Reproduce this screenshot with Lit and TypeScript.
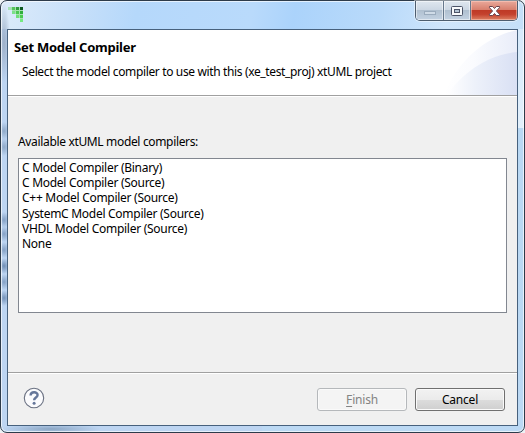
import { LitElement, html, css, svg } from "lit";
import { customElement, property } from "lit/decorators.js";

const LOGO: [number, number, string][] = [
  [0, 0, "#a6e3b4"], [4, 0, "#55c45c"], [8, 0, "#2f9c3c"], [12, 0, "#0d5a22"],
  [4, 4, "#7be08a"], [8, 4, "#4bc853"], [12, 4, "#2fae3c"],
  [8, 8, "#6fe07a"], [12, 8, "#48cc50"],
  [12, 12, "#74ea80"],
];

@customElement("window-controls")
class WindowControls extends LitElement {
  static styles = css`
    :host { display: flex; box-sizing: border-box; width: 103px; height: 20px; border: 1px solid #4d5d6f; border-top: 0; border-radius: 0 0 5px 5px; overflow: hidden; box-shadow: 0 0 0 1px rgba(255,255,255,.45); }
    .btn { display: flex; box-sizing: border-box; height: 19px; background: linear-gradient(#dfe7ef 0, #cdd8e4 45%, #b0c0d0 50%, #c3d2e2 100%); box-shadow: inset 0 0 0 1px rgba(255,255,255,.5); }
    .min { width: 28px; border-right: 1px solid #66788c; }
    .max { width: 27px; border-right: 1px solid #66788c; }
    .close { flex: 1; background: linear-gradient(#e9a99b 0, #d8806e 45%, #bf3a26 50%, #c4412d 70%, #dc8063 100%); box-shadow: inset 0 0 0 1px rgba(255,210,195,.5); }
    svg { display: block; }
  `;
  render() {
    return html`
      <div class="btn min"><svg width="27" height="19"><rect x="8.5" y="10.5" width="11" height="3" fill="#cfdbe7" stroke="#9aabbd"/></svg></div>
      <div class="btn max"><svg width="26" height="19"><rect x="7.5" y="5.5" width="11" height="9" rx="1" fill="#f8fafc" stroke="#4c5468"/><rect x="10.5" y="8.5" width="5" height="3" fill="#b4c4d5" stroke="#4c5468"/></svg></div>
      <div class="btn close"><svg width="46" height="19"><path d="M18.500 5.500h3.200l1.800 2 1.800-2h3.200v1.200L25.400 10l3.100 3.300v1.200h-3.200l-1.800-2-1.800 2h-3.200v-1.200l3.100-3.300-3.100-3.300z" fill="#fff" stroke="#66424c" stroke-width="1"/></svg></div>
    `;
  }
}

@customElement("dialog-button")
class DialogButton extends LitElement {
  @property() label = "";
  @property() mnemonic = "";
  @property({ type: Boolean, reflect: true }) disabled = false;
  static styles = css`
    :host { display: flex; align-items: center; justify-content: center; box-sizing: border-box; width: 90px; height: 23px; border: 1px solid #707070; border-radius: 3px; color: #000; letter-spacing: -.2px; background: linear-gradient(#f2f2f2 0, #ebebeb 50%, #dddddd 50%, #cfcfcf 100%); box-shadow: inset 0 0 0 1px #fafafa; }
    :host([disabled]) { border-color: #b5b8bb; color: #838383; background: #f4f4f4; }
    .key { text-decoration: underline; text-underline-offset: 2px; }
  `;
  render() {
    return html`<span><span class="key">${this.mnemonic}</span>${this.label}</span>`;
  }
}

@customElement("app-root")
class AppRoot extends LitElement {
  private compilers = [
    "C Model Compiler (Binary)",
    "C Model Compiler (Source)",
    "C++ Model Compiler (Source)",
    "SystemC Model Compiler (Source)",
    "VHDL Model Compiler (Source)",
    "None",
  ];
  static styles = css`
    :host { display: block; width: 525px; height: 433px; overflow: hidden; background: #eef2f5; font: 12px/15px "Noto Sans", "Open Sans", sans-serif; color: #000; }
    .window { display: grid; grid-template-rows: 28px 397px; box-sizing: border-box; width: 525px; height: 433px; padding: 0 6px 6px 6px; border: 1px solid #2d3b4a; border-radius: 7px;
      background:
        radial-gradient(ellipse 6px 9px at 3px 130px, #8fa9c8, transparent),
        radial-gradient(ellipse 6px 9px at 3px 146px, #8fa9c8, transparent),
        radial-gradient(ellipse 6px 40px at 3px 42px, #9eb0c8, transparent),
        radial-gradient(ellipse 6px 8px at 3px 219px, #84a0c4, transparent),
        radial-gradient(ellipse 6px 8px at 3px 233px, #84a0c4, transparent),
        radial-gradient(ellipse 6px 8px at 3px 249px, #84a0c4, transparent),
        radial-gradient(ellipse 6px 8px at 3px 265px, #6f8db4, transparent),
        radial-gradient(ellipse 6px 8px at 3px 281px, #84a0c4, transparent),
        radial-gradient(ellipse 6px 8px at 3px 297px, #7592b8, transparent),
        radial-gradient(ellipse 50px 5px at 50px 428px, #8ba6c4, transparent),
        linear-gradient(100deg, #dcebfa 0, #c8e0f9 14%, #b5d8fb 26%, #b9dafb 48%, #abd3fb 56%, #b9dafa 72%, #cfe5fb 85%, #c4dff8 100%) 0 0 / 100% 28px no-repeat,
        linear-gradient(90deg, #bdd5f2 50%, transparent 50%),
        linear-gradient(#d3e8fb 0, #e3f0fb 127px, #b9d8f3 127px, #bcd9f4 100%);
      box-shadow: inset 0 0 0 1px rgba(255,255,255,.65); }
    .titlebar { display: flex; justify-content: space-between; }
    .titlebar svg { margin: 6px 0 0 1px; }
    .client { display: grid; grid-template-rows: 66px 1fr 53px; box-sizing: border-box; width: 511px; border: 1px solid #47617d; background: #f0f0f0; }
    .header { display: flex; box-sizing: border-box; border-bottom: 1px solid #a0a0a0; padding: 9px 0 0 6px; background: #fff; position: relative; }
    .swoosh { position: absolute; right: 0; top: 0; }
    .copy { position: relative; }
    .title { font-size: 13px; font-weight: 700; line-height: 16px; letter-spacing: -.25px; white-space: nowrap; }
    .message { margin: 9px 0 0 8px; letter-spacing: -.36px; white-space: nowrap; }
    .body { display: flex; flex-direction: column; border-top: 1px solid #fff; padding: 37px 10px 0 10px; }
    .caption { letter-spacing: -.34px; }
    .list { box-sizing: border-box; height: 155px; margin-top: 9px; padding: 1px 3px; border: 1px solid #828790; background: #fff; }
    .item { height: 15.2px; line-height: 15.2px; letter-spacing: -.28px; white-space: nowrap; }
    .footer { display: flex; justify-content: space-between; align-items: flex-start; border-top: 1px solid #a0a0a0; padding: 15px 12px 0 15px; box-shadow: inset 0 1px #fff; }
    .actions { display: flex; gap: 8px; }
    .help { width: 22px; height: 22px; margin-top: -1px; }
  `;
  render() {
    return html`
      <div class="window">
        <div class="titlebar">
          <svg width="16" height="16" shape-rendering="crispEdges"><path d="M1 0H15V15H12V11H8V7H4V3H1Z" fill="#a5e2ae"/>${LOGO.map(([x, y, c]) => svg`<rect x=${x} y=${y} width="3" height="3" fill=${c}/>`)}</svg>
          <window-controls></window-controls>
        </div>
        <div class="client">
          <div class="header">
            <svg class="swoosh" width="90" height="65">
              <defs>
                <linearGradient id="a" x1="0" x2="1"><stop offset="0" stop-color="#fff"/><stop offset=".4" stop-color="#fafbfe"/><stop offset="1" stop-color="#e9edf9"/></linearGradient>
                <linearGradient id="b" x1="0" x2="1"><stop offset="0" stop-color="#fff"/><stop offset=".4" stop-color="#edf1fa"/><stop offset="1" stop-color="#d9e0f4"/></linearGradient>
              </defs>
              <path d="M17 65C28 36 54 8 90 0V65Z" fill="url(#a)"/>
              <path d="M20 65C36 42 61 25 90 22V65Z" fill="url(#b)"/>
            </svg>
            <div class="copy">
              <div class="title">Set Model Compiler</div>
              <div class="message">Select the model compiler to use with this (xe_test_proj) xtUML project</div>
            </div>
          </div>
          <div class="body">
            <div class="caption">Available xtUML model compilers:</div>
            <div class="list">${this.compilers.map((c) => html`<div class="item">${c}</div>`)}</div>
          </div>
          <div class="footer">
            <svg class="help" viewBox="0 0 22 22">
              <circle cx="11" cy="11" r="9.7" fill="#fbfbfd" stroke="#6a7182" stroke-width="1.1"/>
              <path d="M7.600 8.600C7.600 4.300 14.600 4.300 14.600 8C14.600 10.500 11.100 10.500 11.100 13.300" fill="none" stroke="#66779a" stroke-width="2.4"/>
              <circle cx="11.1" cy="16.3" r="1.5" fill="#66779a"/>
            </svg>
            <div class="actions">
              <dialog-button disabled mnemonic="F" label="inish"></dialog-button>
              <dialog-button label="Cancel"></dialog-button>
            </div>
          </div>
        </div>
      </div>
    `;
  }
}
